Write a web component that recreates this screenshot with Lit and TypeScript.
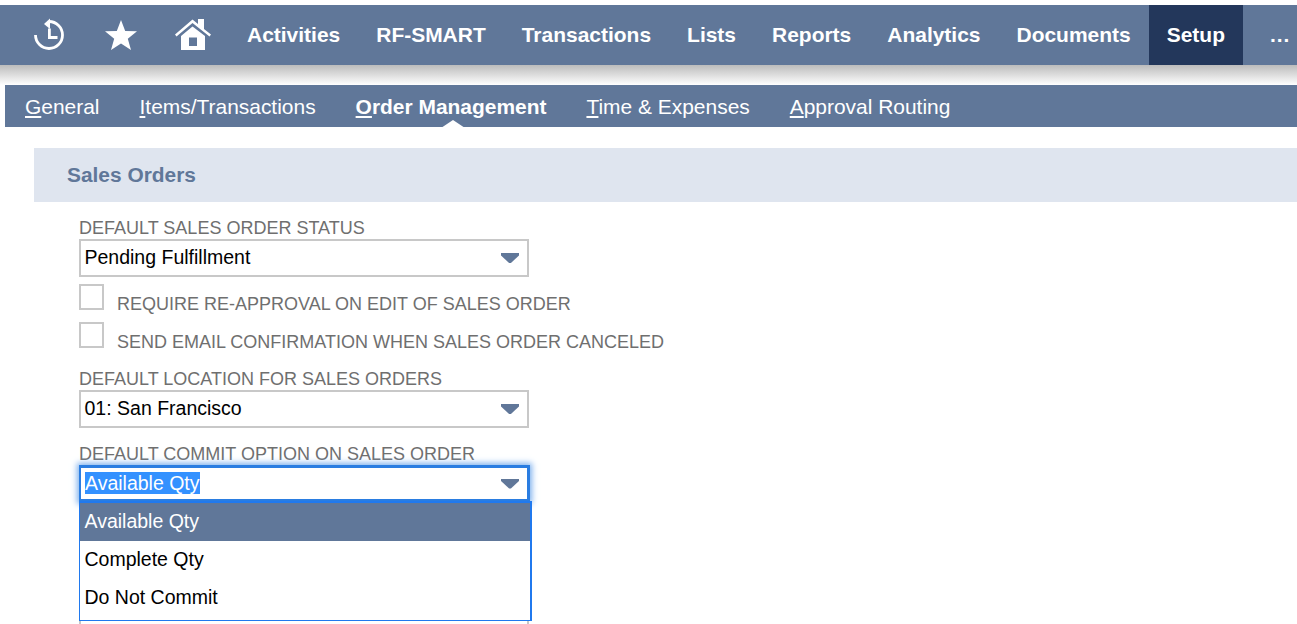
import { LitElement, html, css } from 'lit';
import { customElement } from 'lit/decorators.js';

const mainTabs = ['Activities', 'RF-SMART', 'Transactions', 'Lists', 'Reports', 'Analytics', 'Documents'];

@customElement('app-root')
export class AppRoot extends LitElement {
  static styles = css`
    :host {
      display: block;
      height: 624px;
      overflow: hidden;
      background: #fff;
      padding-top: 5px;
      box-sizing: border-box;
      font-family: "Liberation Sans", Arial, sans-serif;
    }
    .main-nav {
      display: flex;
      height: 60px;
      background: #607799;
      color: #fff;
      font-size: 20.97px;
      font-weight: bold;
      padding-left: 34px;
    }
    .icons {
      display: flex;
      align-items: center;
      gap: 37px;
      margin-right: 18px;
    }
    .icons svg { display: block; fill: #fff; }
    .tab {
      display: flex;
      align-items: center;
      padding: 0 18px;
      white-space: nowrap;
    }
    .tab.active { background: #23375b; }
    .tab.more { padding: 0 0 0 27px; letter-spacing: 1px; }
    .shadow {
      height: 20px;
      background: linear-gradient(#bcbcbc, #ffffff);
    }
    .sub-nav {
      display: flex;
      gap: 40px;
      height: 42px;
      align-items: center;
      margin-left: 5px;
      padding: 1px 0 0 20px;
      box-sizing: border-box;
      background: #607799;
      color: #fff;
      font-size: 20.95px;
    }
    .sub-nav span { position: relative; white-space: nowrap; }
    .sub-nav u { text-underline-offset: 2px; }
    .sub-nav .current { font-weight: bold; }
    .notch {
      position: absolute;
      left: 85px;
      bottom: -9px;
      width: 0;
      height: 0;
      border-left: 12px solid transparent;
      border-right: 12px solid transparent;
      border-bottom: 8px solid #fff;
    }
    .section {
      margin: 21px 0 0 34px;
      height: 54px;
      display: flex;
      align-items: center;
      padding-left: 33px;
      background: #dfe5ef;
      color: #607799;
      font-size: 20.9px;
      font-weight: bold;
    }
    .form {
      display: flex;
      flex-direction: column;
      padding: 15px 0 0 79px;
      color: #6f6f6f;
      font-size: 18px;
    }
    .label { line-height: 22px; height: 22px; }
    .select {
      position: relative;
      box-sizing: border-box;
      display: flex;
      align-items: center;
      justify-content: space-between;
      width: 450px;
      height: 38px;
      padding: 0 8px 2px 3.5px;
      border: 2px solid #c8c8c8;
      color: #000;
      font-size: 19.5px;
      background: #fff;
    }
    .arrow {
      width: 18px;
      height: 10px;
      margin-top: 2px;
      background: #607799;
      clip-path: polygon(0 0, 100% 0, 100% 25%, 55% 100%, 45% 100%, 0 25%);
    }
    .check-row { display: flex; margin-top: 7px; height: 31px; }
    .box {
      box-sizing: border-box;
      width: 25px;
      height: 26px;
      border: 2px solid #c8c8c8;
      margin-right: 13px;
    }
    .check-row span { padding-top: 10px; line-height: 20px; }
    .spaced { margin-top: 15px; }
    .commit { position: relative; }
    .commit .select {
      width: 451px;
      height: 37px;
      border: 3px solid #2a7de1;
      border-left-width: 2px;
      box-shadow: 0 0 6px 2px #7fb2ee;
      padding-left: 4px;
      padding-right: 8px;
    }
    .commit .selected { background: #3391ff; color: #fff; line-height: 22px; }
    .list {
      position: absolute;
      top: 36px;
      left: 0;
      z-index: 2;
      box-sizing: border-box;
      width: 453px;
      height: 120px;
      border: solid #2079ee;
      border-width: 2px 2px 1px 1px;
      background: #fff;
      color: #000;
      font-size: 19.5px;
    }
    .option {
      height: 38px;
      line-height: 36px;
      padding-left: 4.5px;
    }
    .option.on { background: #607799; color: #fff; }
    .next {
      box-sizing: border-box;
      width: 450px;
      height: 30px;
      margin-top: 110px;
      border: 2px solid #c8c8c8;
    }
  `;

  render() {
    return html`
      <nav class="main-nav">
        <div class="icons">
          <svg width="33" height="34" viewBox="0 0 33 34">
            <path d="M15 3.500 A13.500 13.500 0 1 1 1.500 17" fill="none" stroke="#fff" stroke-width="2.800"/>
            <path d="M16 0.500 V11 L10 6 Z"/>
            <path d="M14 10.500 h2.800 v7.500 h6.700 v3 h-9.500 z"/>
          </svg>
          <svg width="34" height="32" viewBox="0 0 34 32">
            <path d="M17 1 L21.2 12 L33 12.300 L23.800 19.700 L27 31 L17 24.400 L7 31 L10.200 19.700 L1 12.300 L12.800 12 Z"/>
          </svg>
          <svg width="36" height="32" viewBox="0 0 36 32">
            <path d="M0 15.500 L17.500 0.500 L23 5 V0 H29 V10 L36 15.500 L34.500 17.500 L17.500 4 L1.500 17.500 Z"/>
            <path fill-rule="evenodd" d="M6 17 L17.500 7.500 L30 17 V31 H6 Z M14 18.500 V27 H22 V18.500 Z"/>
          </svg>
        </div>
        ${mainTabs.map((t) => html`<div class="tab">${t}</div>`)}
        <div class="tab active">Setup</div>
        <div class="tab more">...</div>
      </nav>
      <div class="shadow"></div>
      <nav class="sub-nav">
        <span><u>G</u>eneral</span>
        <span><u>I</u>tems/Transactions</span>
        <span class="current"><u>O</u>rder Management<i class="notch"></i></span>
        <span><u>T</u>ime &amp; Expenses</span>
        <span><u>A</u>pproval Routing</span>
      </nav>
      <div class="section">Sales Orders</div>
      <div class="form">
        <div class="label">DEFAULT SALES ORDER STATUS</div>
        <div class="select">Pending Fulfillment<i class="arrow"></i></div>
        <div class="check-row"><i class="box"></i><span>REQUIRE RE-APPROVAL ON EDIT OF SALES ORDER</span></div>
        <div class="check-row"><i class="box"></i><span>SEND EMAIL CONFIRMATION WHEN SALES ORDER CANCELED</span></div>
        <div class="label spaced">DEFAULT LOCATION FOR SALES ORDERS</div>
        <div class="select">01: San Francisco<i class="arrow"></i></div>
        <div class="label spaced">DEFAULT COMMIT OPTION ON SALES ORDER</div>
        <div class="commit">
          <div class="select"><span class="selected">Available Qty</span><i class="arrow"></i></div>
          <div class="list">
            <div class="option on">Available Qty</div>
            <div class="option">Complete Qty</div>
            <div class="option">Do Not Commit</div>
          </div>
        </div>
        <div class="next"></div>
      </div>
    `;
  }
}
